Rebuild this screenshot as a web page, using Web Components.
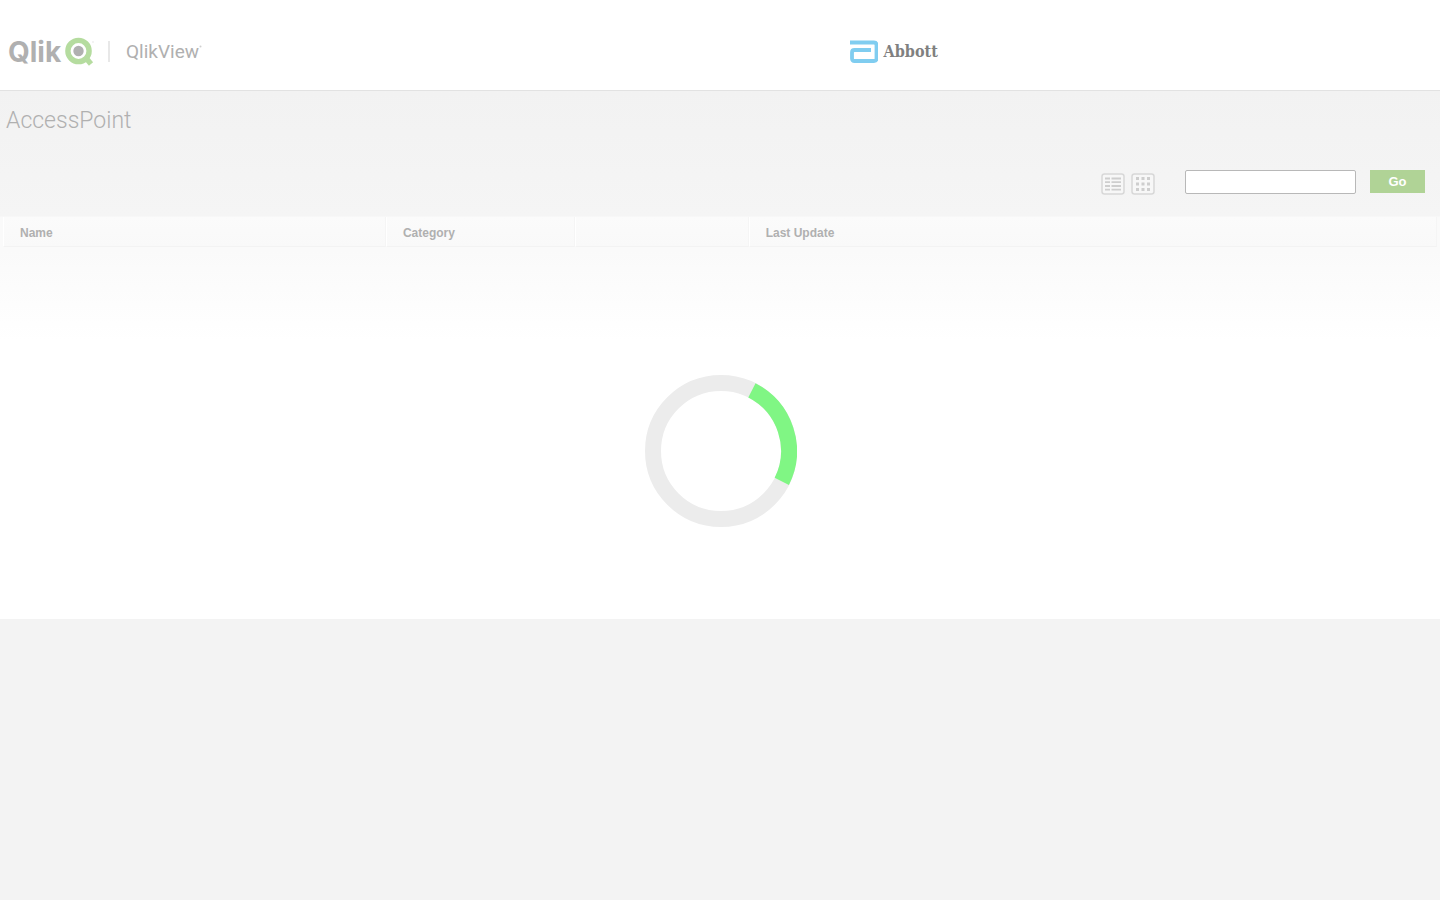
<!DOCTYPE html>
<html lang="en">
<head>
<meta charset="utf-8">
<title>QlikView - AccessPoint</title>
<style>
  html, body { margin: 0; min-height: 100%; background: #f3f3f3; }
  body { font-family: "Liberation Sans", Arial, sans-serif; color: #b0b0b0; }
</style>
</head>
<body>
<access-point-page></access-point-page>
<script>
const define = (name, html) => customElements.define(name, class extends HTMLElement {
  constructor() {
    super();
    const template = document.createElement('template');
    template.innerHTML = html;
    this.attachShadow({ mode: 'open' }).append(template.content.cloneNode(true));
  }
});

define('qlik-brand', `
<style>
  :host { display: flex; align-items: center; color: #b0b0b0; }
  .qlik { font: 700 28px/32px Inter, sans-serif; width: 56px; }
  .mark { display: block; width: 32px; height: 32px; }
  .bar { width: 2px; height: 21px; margin: 0 16px 0 12px; background: #e8e8e8; }
  .view { font: 400 19px/32px Roboto, sans-serif; }
</style>
<span class="qlik">Qlik</span>
<svg class="mark" viewBox="0 0 32 32" aria-hidden="true">
  <path d="M22 22L27 28" stroke="#b5dc9f" stroke-width="5.4"/>
  <circle cx="14.5" cy="15" r="10.6" fill="none" stroke="#b5dc9f" stroke-width="5.4"/>
  <circle cx="14.5" cy="15" r="5.2" fill="#b0b0b0"/>
  <circle cx="29" cy="6" r=".8" fill="#e3e3e3"/>
</svg>
<span class="bar"></span>
<span class="view">QlikView</span>
<svg width="3" height="14" viewBox="0 0 3 14" aria-hidden="true"><circle cx="1.5" cy="1.5" r="1" fill="#cfcfcf"/></svg>
`);

define('abbott-brand', `
<style>
  :host { display: flex; align-items: center; gap: 6px; color: #808080; }
  svg { display: block; }
  span { font: bold 16px/24px "DejaVu Serif Condensed", "DejaVu Serif", serif; }
</style>
<svg width="28" height="24" viewBox="0 0 28 24" aria-hidden="true">
  <path d="M0 2.5H24Q26.5 2.5 26.5 5V18.500Q26.500 21 24 21H4.500Q2 21 2 18.500V12.500Q2 10 4.500 10H21" fill="none" stroke="#80cdf0" stroke-width="3.800"/>
</svg>
<span>Abbott</span>
`);

define('site-header', `
<style>
  :host { display: grid; grid-template-columns: 59% 1fr; align-items: center; box-sizing: border-box;
    height: 91px; padding: 13px 0 0; background: #fff; border-bottom: 1px solid #e2e2e2; }
  qlik-brand { padding-left: 8px; }
</style>
<qlik-brand></qlik-brand>
<abbott-brand></abbott-brand>
`);

define('view-toggle', `
<style>
  :host { display: flex; gap: 6px; }
  button { display: block; padding: 0; border: 0; background: none; width: 24px; height: 22px; }
  svg { display: block; }
</style>
<button type="button" aria-label="Detail view">
  <svg width="24" height="22" viewBox="0 0 24 22">
    <rect x="1" y="1" width="22" height="20" rx="2.5" fill="#f7f7f7" stroke="#d8d8d8" stroke-width="1.5"/>
    <path d="M4 5.5H9M10.5 5.5H20M4 9.2H9M10.5 9.2H20M4 13H9M10.5 13H20M4 16.7H9M10.5 16.7H20" stroke="#cecece" stroke-width="1.8"/>
  </svg>
</button>
<button type="button" aria-label="Thumbnail view">
  <svg width="24" height="22" viewBox="0 0 24 22">
    <rect x="1" y="1" width="22" height="20" rx="2.5" fill="#f7f7f7" stroke="#d8d8d8" stroke-width="1.5"/>
    <path d="M5 5.5H8M10.5 5.5H13.5M16 5.5H19M5 11H8M10.5 11H13.5M16 11H19M5 16.5H8M10.5 16.5H13.5M16 16.5H19" stroke="#cecece" stroke-width="3"/>
  </svg>
</button>
`);

define('search-form', `
<style>
  :host { display: block; }
  form { display: flex; gap: 14px; margin: 0; }
  input { box-sizing: border-box; width: 171px; height: 24px; padding: 2px 4px; margin: 0;
    border: 1px solid #b8b8b8; border-radius: 2px; background: #fff; font: 13px/18px "Liberation Sans", sans-serif; }
  button { width: 55px; height: 23px; padding: 0; border: 0; background: #b0d396; color: #fff;
    font: bold 13px/23px "Liberation Sans", sans-serif; }
</style>
<form onsubmit="return false">
  <input type="text" aria-label="Search">
  <button type="submit">Go</button>
</form>
`);

define('document-table', `
<style>
  :host { display: block; padding: 0 3px; }
  table { width: 100%; table-layout: fixed; border-collapse: separate; border-spacing: 0; }
  th { box-sizing: border-box; height: 30px; padding: 2px 16px 0; text-align: left; color: #b0b0b0;
    font: bold 12px/16px "Liberation Sans", sans-serif; background: linear-gradient(#fbfbfb, #f9f9f9);
    border-left: 1px solid #fff; border-right: 1px solid #f5f5f5; border-bottom: 1px solid #f3f3f3; }
  .name { width: 26.7%; }
  .category { width: 13.2%; }
  .tools { width: 12.1%; }
</style>
<table>
  <thead><tr>
    <th class="name" scope="col">Name</th>
    <th class="category" scope="col">Category</th>
    <th class="tools" scope="col"></th>
    <th scope="col">Last Update</th>
  </tr></thead>
  <tbody></tbody>
</table>
`);

define('loading-ring', `
<style>
  :host { position: fixed; inset: 0; display: grid; place-items: center; pointer-events: none; }
</style>
<svg width="154" height="154" viewBox="0 0 154 154" role="img" aria-label="Loading">
  <circle cx="78" cy="78" r="68" fill="none" stroke="#ececec" stroke-width="16"/>
  <path d="M108.9 17.4A68 68 0 0 1 138.800 108.400" fill="none" stroke="#80f684" stroke-width="16"/>
</svg>
`);

define('access-point-page', `
<style>
  :host { display: block; }
  main { min-height: 528px; background: linear-gradient(#f2f2f2 0, #f5f5f5 125px, #fafafa 126px, #fafafa 160px, #fff 250px); }
  .top { box-sizing: border-box; min-height: 126px; padding: 14px 15px 22px 6px; display: flex;
    flex-direction: column; justify-content: space-between; }
  h1 { margin: 0; font: 300 23px/32px Roboto, sans-serif; color: #b0b0b0; }
  .tools { display: flex; justify-content: flex-end; align-items: center; gap: 30px; }
  view-toggle { padding-top: 4px; }
</style>
<site-header></site-header>
<main>
  <div class="top">
    <h1>AccessPoint</h1>
    <div class="tools"><view-toggle></view-toggle><search-form></search-form></div>
  </div>
  <document-table></document-table>
</main>
<loading-ring></loading-ring>
`);
</script>
</body>
</html>
